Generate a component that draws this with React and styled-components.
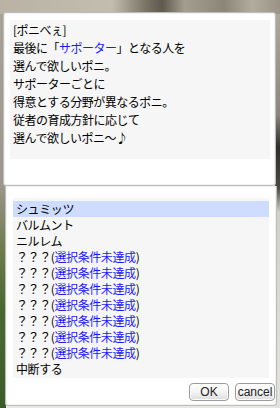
import React from 'react';
import styled, { createGlobalStyle } from 'styled-components';

const GlobalStyle = createGlobalStyle`
  html, body {
    margin: 0;
    padding: 0;
    background: #b3ac9f;
  }
  * { box-sizing: border-box; }
`;

const Scene = styled.div`
  width: 280px;
  height: 408px;
  overflow: hidden;
  display: flex;
  flex-direction: column;
  font-family: "Noto Sans CJK JP", "Liberation Sans", sans-serif;
  font-size: 12px;
  color: #000;
  background:
    linear-gradient(to right, #bab3a5 0, #c4bdaf 40%, #7a7366 52%, #5f594f 58%, #a59e90 66%, #8c8578 80%, #b3ac9e 90%, #9a9386 100%) top left / 280px 14px no-repeat,
    linear-gradient(to bottom, #aaa498 0, #9d978b 45%, #6c7a4a 62%, #4b6a32 75%, #3c5a28 100%) top left / 6px 408px no-repeat,
    linear-gradient(to bottom, #b3ac9e 0, #8d877b 28%, #2f2e2a 36%, #4a4842 46%, #d0d0c8 52%, #e4e4de 100%) top right / 5px 408px no-repeat,
    #e8e8e4;
`;

const Window = styled.div`
  background: #fff;
  border: 1px solid #bdbdbd;
  border-radius: 3px;
  box-shadow: inset 0 0 0 1px #f2f2f2;
`;

const TalkWindow = styled(Window)`
  margin: 12px 0 0 3px;
  width: 273px;
  height: 174px;
  padding: 7px 5px 0 6px;
  position: relative;
  z-index: 1;
`;

const TalkArea = styled.div`
  background: #f6f6f6;
  height: 139px;
  padding: 1px 0 0 3px;
  line-height: 18px;
  letter-spacing: -0.5px;
  white-space: nowrap;
`;

const Line = styled.div`
  height: 18px;
`;

const Hl = styled.span`
  color: #1a1aff;
`;

const MenuWindow = styled(Window)`
  margin: 0 0 0 5px;
  width: 272px;
  height: 220px;
  border-top: none;
  border-radius: 0 0 3px 3px;
  padding: 12px 7px 0 7px;
  display: flex;
  flex-direction: column;
`;

const List = styled.div`
  background: #f6f6f6;
  height: 180px;
  padding-top: 3px;
  letter-spacing: -0.4px;
  white-space: nowrap;
`;

const Row = styled.div`
  height: 16px;
  line-height: 16px;
  padding-left: 3px;
  background: ${(p) => (p.$selected ? '#cddcff' : 'transparent')};
`;

const Locked = styled.span`
  color: #1a1aff;
`;

const ButtonBar = styled.div`
  display: flex;
  justify-content: flex-end;
  gap: 6px;
  margin-top: 5px;
  margin-right: -6px;
`;

const Button = styled.button`
  width: 40px;
  height: 18px;
  padding: 0;
  border: 1px solid #9c9c9c;
  border-radius: 4px;
  background: linear-gradient(to bottom, #ffffff 0%, #f4f4f4 50%, #dcdcdc 100%);
  box-shadow: inset 0 0 0 1px #fff;
  font-family: "Liberation Sans", Arial, sans-serif;
  font-size: 12px;
  line-height: 16px;
  color: #222;
`;

const talk = [
  <>[ポニべぇ]</>,
  <>最後に「<Hl>サポーター</Hl>」となる人を</>,
  <>選んで欲しいポニ。</>,
  <>サポーターごとに</>,
  <>得意とする分野が異なるポニ。</>,
  <>従者の育成方針に応じて</>,
  <>選んで欲しいポニ～♪</>,
];

const names = ['シュミッツ', 'バルムント', 'ニルレム'];

export default function App() {
  return (
    <>
      <GlobalStyle />
      <Scene>
        <TalkWindow>
          <TalkArea>
            {talk.map((t, i) => (
              <Line key={i}>{t}</Line>
            ))}
          </TalkArea>
        </TalkWindow>
        <MenuWindow>
          <List>
            {names.map((n, i) => (
              <Row key={n} $selected={i === 0}>{n}</Row>
            ))}
            {Array.from({ length: 7 }).map((_, i) => (
              <Row key={'q' + i}>
                ？？？(<Locked>選択条件未達成</Locked>)
              </Row>
            ))}
            <Row>中断する</Row>
          </List>
          <ButtonBar>
            <Button>OK</Button>
            <Button>cancel</Button>
          </ButtonBar>
        </MenuWindow>
      </Scene>
    </>
  );
}
